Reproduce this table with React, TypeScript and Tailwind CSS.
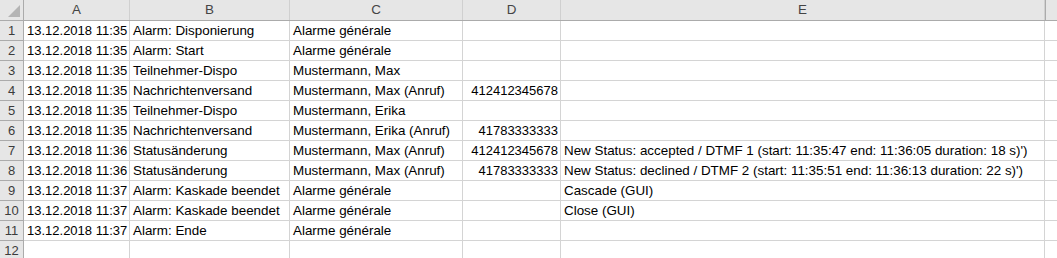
const rows: [string, string, string, string, string][] = [
  ['13.12.2018 11:35', 'Alarm: Disponierung', 'Alarme générale', '', ''],
  ['13.12.2018 11:35', 'Alarm: Start', 'Alarme générale', '', ''],
  ['13.12.2018 11:35', 'Teilnehmer-Dispo', 'Mustermann, Max', '', ''],
  ['13.12.2018 11:35', 'Nachrichtenversand', 'Mustermann, Max (Anruf)', '412412345678', ''],
  ['13.12.2018 11:35', 'Teilnehmer-Dispo', 'Mustermann, Erika', '', ''],
  ['13.12.2018 11:35', 'Nachrichtenversand', 'Mustermann, Erika (Anruf)', '41783333333', ''],
  ['13.12.2018 11:36', 'Statusänderung', 'Mustermann, Max (Anruf)', '412412345678', "New Status: accepted / DTMF 1 (start: 11:35:47 end: 11:36:05 duration: 18 s)')"],
  ['13.12.2018 11:36', 'Statusänderung', 'Mustermann, Max (Anruf)', '41783333333', "New Status: declined / DTMF 2 (start: 11:35:51 end: 11:36:13 duration: 22 s)')"],
  ['13.12.2018 11:37', 'Alarm: Kaskade beendet', 'Alarme générale', '', 'Cascade (GUI)'],
  ['13.12.2018 11:37', 'Alarm: Kaskade beendet', 'Alarme générale', '', 'Close (GUI)'],
  ['13.12.2018 11:37', 'Alarm: Ende', 'Alarme générale', '', ''],
  ['', '', '', '', ''],
]

const cols = ['A', 'B', 'C', 'D', 'E']
const widths = ['w-[106px]', 'w-[160px]', 'w-[173px]', 'w-[98px]', 'w-[484px]']
// text columns are a touch larger, digit columns stay at 13px
const sizes = ['text-[13px]', 'text-[13.4px]', 'text-[13.4px]', 'text-[13px]', 'text-[13.4px]']

export default function App() {
  return (
    <div className="w-[1057px] h-[258px] overflow-hidden bg-white text-[13px] text-black font-['Liberation_Sans',Arial,sans-serif] leading-none">
      {/* column headers */}
      <div className="flex h-[21px] bg-[#e6e6e6] border-b border-[#ababab]">
        <div className="relative w-[24px] shrink-0 border-r border-[#ababab]">
          <svg className="absolute right-[3px] bottom-[3px]" width="12" height="12" viewBox="0 0 12 12">
            <polygon points="12,0 12,12 0,12" fill="#b4b4b4" />
          </svg>
        </div>
        {cols.map((c, i) => (
          <div key={c} className={`${widths[i]} shrink-0 flex items-center justify-center border-r border-[#d0d0d0] text-[#444] text-[13.4px]`}>
            {c}
          </div>
        ))}
        <div className="flex-1 border-l border-[#ababab]"></div>
      </div>

      {rows.map((r, ri) => (
        <div key={ri} className="flex h-[20px]">
          <div className="w-[24px] shrink-0 bg-[#e6e6e6] border-r border-b border-[#ababab] text-[#3c3c3c] flex items-end justify-center pb-[3px]">
            {ri + 1}
          </div>
          {r.map((v, ci) => (
            <div
              key={ci}
              className={`${widths[ci]} ${sizes[ci]} shrink-0 border-r border-b border-[#d4d4d4] flex items-end pb-[3px] whitespace-nowrap ${ci === 3 ? 'justify-end pr-[2px]' : 'pl-[3px]'}`}
            >
              {v}
            </div>
          ))}
          <div className="flex-1 border-b border-[#d4d4d4]"></div>
        </div>
      ))}
    </div>
  )
}
